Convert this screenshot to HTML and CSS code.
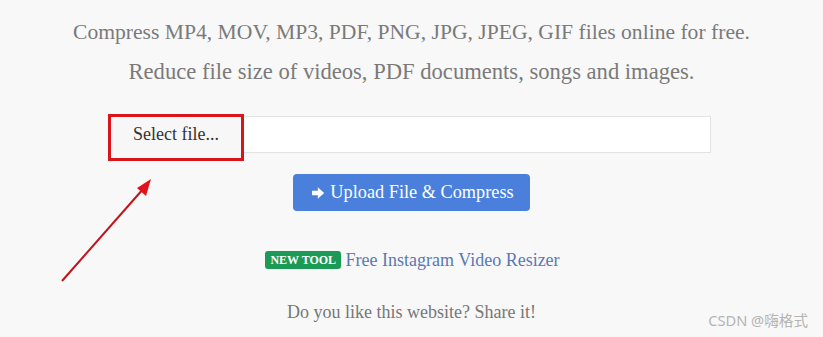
FILE: index.html
```html
<!DOCTYPE html>
<html lang="en">
<head>
    <meta charset="UTF-8">
    <title>Compress files</title>
    <link rel="stylesheet" href="styles.css">
</head>
<body>
    <div class="page">
        <p class="lead">Compress MP4, MOV, MP3, PDF, PNG, JPG, JPEG, GIF files online for free.</p>
        <p class="lead lead-2">Reduce file size of videos, PDF documents, songs and images.</p>
        <div class="file-row">
            <span class="pick">Select file...</span>
            <span class="file-name"></span>
        </div>
        <button class="upload">
            <svg class="arr" width="14" height="14" viewBox="0 0 14 14"><path d="M1 4.8h5.8V1.2L13.2 7l-6.4 5.8V9.2H1z" fill="#fff"/></svg>
            Upload File &amp; Compress
        </button>
        <p class="tool"><span class="badge">NEW TOOL</span> <a href="#">Free Instagram Video Resizer</a></p>
        <p class="share">Do you like this website? Share it!</p>
    </div>
    <svg class="pointer" width="110" height="120" viewBox="0 0 110 120">
        <line x1="2" y1="109" x2="84" y2="16" stroke="#c0141a" stroke-width="2"/>
        <polygon points="91,7 77,16 86,24" fill="#e3131b"/>
    </svg>
    <div class="mark">CSDN @嗨格式</div>
</body>
</html>
```
FILE: styles.css
```css
body
{
    margin: 0;
    background: #f8f8f8;
    font-family: "Liberation Serif", serif;
    color: #777;
    width: 823px;
    height: 337px;
    overflow: hidden;
    position: relative;
}
.page
{
    display: flex;
    flex-direction: column;
    align-items: center;
    padding-top: 20px;
}
.lead
{
    margin: 0 0 16px;
    font-size: 21.6px;
    line-height: 24px;
    color: #7a7a7a;
}
.lead-2
{
    font-size: 22.6px;
}
.file-row
{
    display: flex;
    width: 602px;
    height: 37px;
    margin-top: 16px;
    margin-left: -3px;
    background: #fff;
    border: 1px solid #e2e2e2;
    box-sizing: border-box;
}
.pick
{
    width: 136px;
    height: 47px;
    margin: -3px 0 0 -2px;
    box-sizing: border-box;
    border: 3px solid #d9141b;
    background: #f7f7f7;
    color: #333;
    font-size: 18px;
    padding: 7px 0 0 22px;
}
.upload
{
    margin-top: 21px;
    width: 237px;
    height: 37px;
    background: #4a7fdb;
    border: none;
    border-radius: 4px;
    color: #fff;
    font-family: "Liberation Serif", serif;
    font-size: 18.3px;
    padding: 0 0 0 2px;
    display: flex;
    align-items: center;
    justify-content: center;
    gap: 5px;
}
.tool
{
    margin: 38px 0 0;
    font-size: 18px;
    line-height: 22px;
    margin-left: 2px;
}
.badge
{
    display: inline-block;
    background: #1b9a55;
    color: #fff;
    font-size: 12px;
    font-weight: bold;
    line-height: 18px;
    padding: 0 5px;
    border-radius: 3px;
    vertical-align: 2px;
}
.tool a
{
    color: #5a79b3;
    text-decoration: none;
}
.share
{
    margin: 31px 0 0;
    font-size: 18px;
    color: #777;
}
.pointer
{
    position: absolute;
    left: 60px;
    top: 172px;
}
.mark
{
    position: absolute;
    right: 15px;
    bottom: 7px;
    font-family: "Noto Sans", "Noto Sans CJK SC", sans-serif;
    font-size: 14.6px;
    color: #b4b4b4;
}
```
